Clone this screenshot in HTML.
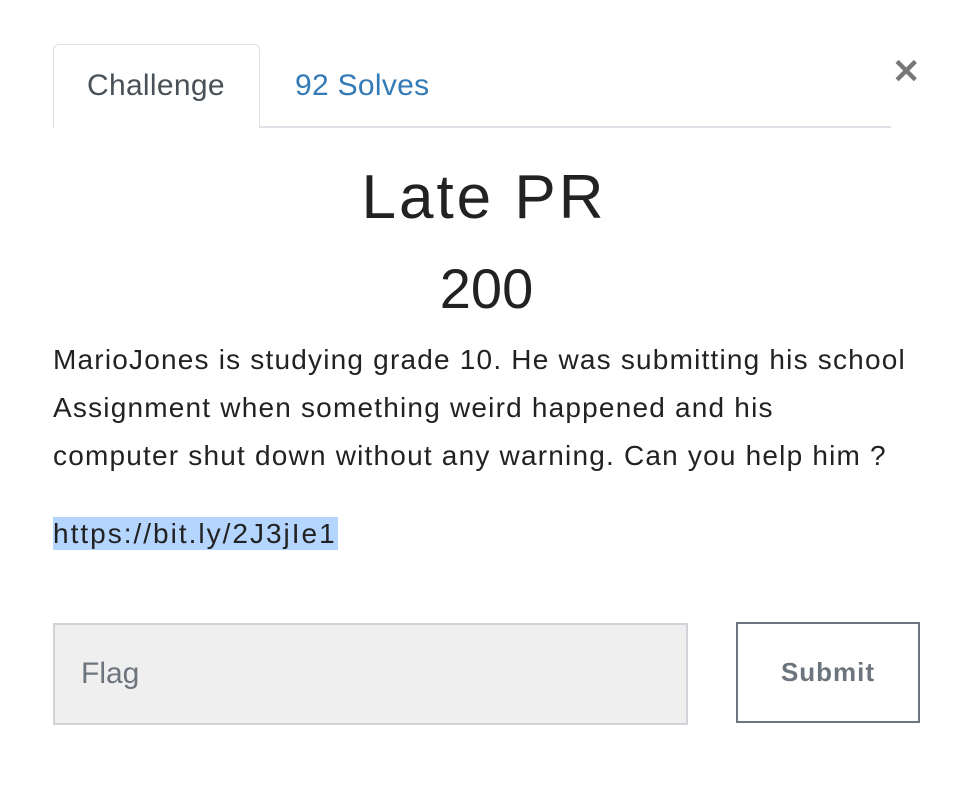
<!DOCTYPE html>
<html><head><meta charset="utf-8"><style>
body{margin:0;background:#fff;width:978px;height:796px;position:relative;font-family:"Liberation Sans",sans-serif;overflow:hidden}
.tab{position:absolute;left:53px;top:44px;width:207px;height:84px;border:1px solid #dee2e6;border-bottom:none;border-radius:6px 6px 0 0;background:#fff;box-sizing:border-box}
.line{position:absolute;left:53px;top:126px;width:838px;height:2px;background:#dee2e6}
.t1{position:absolute;left:87px;top:69px;font-size:30px;color:#495057;letter-spacing:0.3px}
.t2{position:absolute;left:295px;top:69px;font-size:30px;color:#337ab7;letter-spacing:0.3px}
.x{position:absolute;left:892px;top:52px;font-size:34px;font-weight:bold;color:#777}
h1{position:absolute;left:0;width:968px;text-align:center;top:162px;margin:0;font-size:62px;font-weight:normal;color:#222;letter-spacing:3px}
.pts{position:absolute;left:0;width:973px;text-align:center;top:256px;font-size:56px;color:#222}
.desc{position:absolute;left:53px;top:336px;width:920px;font-size:28px;line-height:48px;color:#222;letter-spacing:1.2px;white-space:nowrap}
.link{position:absolute;left:53px;top:517px;font-size:28px;line-height:33px;background:#b4d5fe;color:#222;padding-right:1px;letter-spacing:2px}
.inp{position:absolute;left:53px;top:623px;width:635px;height:102px;background:#efefef;border:2px solid #d0d4d9;box-sizing:border-box}
.inp span{position:absolute;left:26px;top:32px;font-size:30px;color:#6c757d}
.btn{position:absolute;left:736px;top:622px;width:184px;height:101px;border:2px solid #6c757d;box-sizing:border-box;text-align:center;line-height:97px;font-size:26px;font-weight:bold;color:#6c757d;letter-spacing:1px}
</style></head><body>
<div class="line"></div>
<div class="tab"></div>
<div class="t1">Challenge</div>
<div class="t2">92 Solves</div>
<div class="x">✕</div>
<h1>Late PR</h1>
<div class="pts">200</div>
<div class="desc">MarioJones is studying grade 10. He was submitting his school<br>Assignment when something weird happened and his<br>computer shut down without any warning. Can you help him ?</div>
<div class="link">https://bit.ly/2J3jIe1</div>
<div class="inp"><span>Flag</span></div>
<div class="btn">Submit</div>
</body></html>
